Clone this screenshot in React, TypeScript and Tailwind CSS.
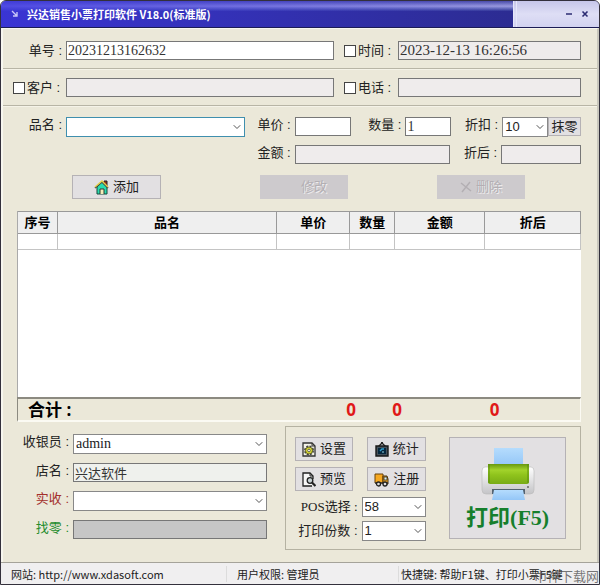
import React, { useState } from "react";
import { ChevronDown } from "lucide-react";

const field = "h-[19px] w-full min-w-0 border border-[#777] px-px font-['Liberation_Serif','Noto_Sans_CJK_SC',serif] text-[#333] outline-none";

function Combo({ id, label, options = [""], selectClass = "border-[#888]" }: {
    id: string;
    label: string;
    options?: string[];
    selectClass?: string;
}) {
    return (
        <div className="relative min-w-0">
            <select
                id={id}
                aria-label={label}
                className={`block h-5 w-full appearance-none border bg-white pr-4 pl-0.5 leading-4 text-[#222] outline-none ${selectClass}`}
            >
                {options.map((option) => (
                    <option key={option}>{option}</option>
                ))}
            </select>
            <ChevronDown className="pointer-events-none absolute top-1 right-0.5 size-3 text-[#555]" strokeWidth={2} />
        </div>
    );
}

function HomeIcon() {
    return (
        <svg viewBox="0 0 15 15" className="size-[15px]">
            <path d="M10 1h3v5h-3z" fill="#a02818" stroke="#222" />
            <path d="M3 7v7h10V7L8 2z" fill="#27dcae" stroke="#164a3c" />
            <path d="M1 8l7-6 6 6" fill="none" stroke="#444" strokeWidth="1.6" />
            <path d="M1 7l7-6 6 6" fill="none" stroke="#e2d24a" strokeWidth="1.3" />
            <path d="M6 14V9h4v5" fill="#f4efb8" stroke="#333" />
        </svg>
    );
}

function GearPageIcon() {
    return (
        <svg viewBox="0 0 14 15" className="h-[15px] w-3.5">
            <path d="M1 1h9l3 3v10H1z" fill="#f4f3e8" stroke="#333" strokeWidth="1.3" />
            <path d="M10 1v3h3" fill="none" stroke="#333" />
            <circle cx="7" cy="8.5" r="4" fill="none" stroke="#444" strokeWidth="2" strokeDasharray="2 1.14" />
            <circle cx="7" cy="8.5" r="3.5" fill="#d8d832" stroke="#55551c" strokeWidth=".8" />
            <circle cx="7" cy="8.5" r="1.3" fill="#fff" stroke="#444" strokeWidth=".8" />
        </svg>
    );
}

function BoardIcon() {
    return (
        <svg viewBox="0 0 14 15" className="h-[15px] w-3.5">
            <path d="M3 5l4-4 4 4" fill="none" stroke="#222" strokeWidth="1.4" />
            <path d="M6 0h2v2H6z" fill="#222" />
            <path d="M1 4h12v10H1z" fill="#46525c" stroke="#181818" strokeWidth="1.4" />
            <path d="M3 6h8v6H3z" fill="#06273d" />
            <path d="M5 9l2-2h2" fill="none" stroke="#2f9fd0" strokeWidth="1.4" />
            <path d="M7 10h2" stroke="#94d9e8" />
        </svg>
    );
}

function PreviewIcon() {
    return (
        <svg viewBox="0 0 14 15" className="h-[15px] w-3.5">
            <path d="M10 14H1V1h7l3 3v3" fill="#f7f7f7" stroke="#222" strokeWidth="1.3" />
            <path d="M8 1v3h3" fill="none" stroke="#222" />
            <circle cx="8" cy="8.5" r="2.8" fill="#c9d3d6" stroke="#222" strokeWidth="1.3" />
            <path d="M10 10.5l3.500 3.500" stroke="#222" strokeWidth="2.2" />
        </svg>
    );
}

function TruckIcon() {
    return (
        <svg viewBox="0 0 15 15" className="size-[15px]">
            <path d="M1 2h8v9H1z" fill="#f6a821" stroke="#6b430b" />
            <path d="M9 4h4l1 3v5H9z" fill="#f4a927" stroke="#4b320b" />
            <path d="M10 5h3v3h-3z" fill="#d8eef3" stroke="#3b321c" strokeWidth=".8" />
            <path d="M1 11h13" stroke="#333" strokeWidth="1.4" />
            <circle cx="4.5" cy="12" r="2" fill="#ddd" stroke="#222" strokeWidth="1.3" />
            <circle cx="11" cy="12" r="2" fill="#ddd" stroke="#222" strokeWidth="1.3" />
        </svg>
    );
}

function PrinterIcon() {
    return (
        <svg viewBox="0 0 56 56" className="size-14">
            <defs>
                <linearGradient id="paper" x2="0" y2="1">
                    <stop stopColor="#b5dcfd" />
                    <stop offset="1" stopColor="#94c6f7" />
                </linearGradient>
                <linearGradient id="green" x2="0" y2="1">
                    <stop stopColor="#699910" />
                    <stop offset=".3" stopColor="#a2d32b" />
                    <stop offset=".55" stopColor="#8fc31c" />
                    <stop offset="1" stopColor="#79ac16" />
                </linearGradient>
                <linearGradient id="shell" x2="0" y2="1">
                    <stop stopColor="#fff" />
                    <stop offset="1" stopColor="#c4c4c7" />
                </linearGradient>
            </defs>
            <path d="M5 21h46q3 0 3 4v19q0 4-4 4H6q-4 0-4-4V25q0-4 3-4z" fill="url(#shell)" stroke="#bbb" strokeWidth=".6" />
            <path d="M14 2h29v18H14z" fill="url(#paper)" />
            <path d="M8 18h41v18q0 2-2 2H10q-2 0-2-2z" fill="url(#green)" />
            <path d="M8 18h2v19H8zM47 18h2v19h-2z" fill="#55870c" opacity=".45" />
            <circle cx="48" cy="41" r="1" fill="#666" />
            <path d="M12 43h33v5H12z" fill="#53616f" />
            <path d="M14 44h29l2 10H12z" fill="url(#paper)" />
        </svg>
    );
}

const columns = [
    { name: "序号", width: "w-[7%]" },
    { name: "品名", width: "w-[39%]" },
    { name: "单价", width: "w-[13%]" },
    { name: "数量", width: "w-[8%]" },
    { name: "金额", width: "w-[16%]" },
    { name: "折后", width: "w-[17%]" },
];

const tools = [
    { name: "设置", icon: <GearPageIcon /> },
    { name: "统计", icon: <BoardIcon /> },
    { name: "预览", icon: <PreviewIcon /> },
    { name: "注册", icon: <TruckIcon /> },
];

const button = "flex items-center justify-center border border-[#b5b2b5] bg-[#e2e0e2]";
const disabledButton = "flex h-6 items-center justify-center gap-1 bg-[#cdcacd] text-[#b3afb3] [text-shadow:1px_1px_0_#efedef]";

export default function App() {
    const [order, setOrder] = useState("20231213162632");
    const [count, setCount] = useState("1");

    return (
        <div className="relative overflow-hidden rounded-t-md border border-[#33303c] bg-[#ebe8d9] font-['Liberation_Sans','Noto_Sans_CJK_SC',sans-serif] text-[13px] leading-4 text-[#222]">
            <header className="flex h-[27px] border-b border-[#1c1c55] bg-linear-to-b from-[#4a4aa8] via-[#9a9ade] via-20% to-[#2c2c92] to-40%">
                <div className="flex flex-1 items-center gap-2 bg-linear-to-r from-[#3d37e4]/80 to-transparent pl-2.5">
                    <svg viewBox="0 0 8 8" className="size-2">
                        <path d="M1 1l5 5M6 2v4H2" fill="none" stroke="#c8c8f8" strokeWidth="1.4" />
                    </svg>
                    <h1 className="font-['Noto_Sans_CJK_SC',sans-serif] text-[11px] font-bold text-white">兴达销售小票打印软件 V18.0(标准版)</h1>
                </div>
                <div className="flex w-[86px] items-center justify-end gap-1 border-l-4 border-double border-[#e6e6fa] bg-linear-to-b from-[#c6c6ea] via-[#dedef5] to-[#d2d2f0] pr-2 text-[#2b2b72]">
                    <button aria-label="最小化" className="flex size-3 items-center justify-center">
                        <svg viewBox="0 0 8 8" className="size-2"><path d="M1 4h6" stroke="currentColor" strokeWidth="1.6" /></svg>
                    </button>
                    <button aria-label="关闭" className="flex size-3 items-center justify-center">
                        <svg viewBox="0 0 8 8" className="size-2"><path d="M1.500 1.500l5 5M6.500 1.500l-5 5" stroke="currentColor" strokeWidth="1.6" /></svg>
                    </button>
                </div>
            </header>

            <main className="border-x-2 border-t border-[#f7f6ef] border-r-[#c9c7bd]">
                <div className="grid h-10 grid-cols-[63px_268fr_64px_183fr] items-center border-b border-[#b8b5a6] pt-1 pr-4">
                    <label htmlFor="order" className="pr-1 text-right">单号 :</label>
                    <input id="order" value={order} onChange={(e) => setOrder(e.target.value)} className={`${field} bg-white text-sm`} />
                    <label className="flex items-center gap-0.5 pl-2.5">
                        <input type="checkbox" className="size-3 shrink-0 appearance-none border border-[#444] bg-white" />
                        时间 :
                    </label>
                    <input aria-label="时间" readOnly value="2023-12-13 16:26:56" className={`${field} bg-[#efecec] text-[15px]`} />
                </div>
                <div className="grid h-[37px] grid-cols-[63px_268fr_64px_183fr] items-center border-y border-t-[#f5f3e8] border-b-[#b8b5a6] pr-4">
                    <label className="flex items-center gap-0.5 pl-2.5">
                        <input type="checkbox" className="size-3 shrink-0 appearance-none border border-[#444] bg-white" />
                        客户 :
                    </label>
                    <input aria-label="客户" readOnly className={`${field} bg-[#efecec] text-sm`} />
                    <label className="flex items-center gap-0.5 pl-2.5">
                        <input type="checkbox" className="size-3 shrink-0 appearance-none border border-[#444] bg-white" />
                        电话 :
                    </label>
                    <input aria-label="电话" readOnly className={`${field} bg-[#efecec] text-sm`} />
                </div>

                <section className="grid grid-cols-[63px_179fr_337fr] items-start border-t border-[#f5f3e8] pt-2.5 pr-4">
                    <label htmlFor="product" className="pr-1 text-right">品名 :</label>
                    <Combo id="product" label="品名" selectClass="border-[#3f8fae]" />
                    <div className="flex min-w-0 flex-col gap-2">
                        <div className="grid h-5 grid-cols-[50px_57fr_54px_46fr_51px_46fr_33px] items-start">
                            <label htmlFor="price" className="pr-1 text-right">单价 :</label>
                            <input id="price" className={`${field} bg-white text-sm`} />
                            <label htmlFor="count" className="pr-1 text-right">数量 :</label>
                            <input id="count" value={count} onChange={(e) => setCount(e.target.value)} className={`${field} bg-white text-sm`} />
                            <label htmlFor="discount" className="pr-1 text-right">折扣 :</label>
                            <Combo id="discount" label="折扣" options={["10", "9", "8"]} />
                            <button className={`${button} h-[19px]`}>抹零</button>
                        </div>
                        <div className="grid h-5 grid-cols-[50px_156fr_51px_80fr] items-start">
                            <label htmlFor="amount" className="pr-1 text-right">金额 :</label>
                            <input id="amount" readOnly className={`${field} bg-[#efecec] text-sm`} />
                            <label htmlFor="after" className="pr-1 text-right">折后 :</label>
                            <input id="after" readOnly className={`${field} bg-[#efecec] text-sm`} />
                        </div>
                    </div>
                </section>

                <div className="grid grid-cols-[69fr_89fr_99fr_88fr_89fr_88fr_72fr] pt-2.5 pb-3">
                    <button className={`${button} col-start-2 h-6 gap-1`}><HomeIcon />添加</button>
                    <button disabled className={`${disabledButton} col-start-4 pl-5`}>修改</button>
                    <button disabled className={`${disabledButton} col-start-6`}>
                        <svg viewBox="0 0 12 12" className="size-3"><path d="M1 2l10 8M10 1L2 11" stroke="currentColor" strokeWidth="1.5" /></svg>
                        删除
                    </button>
                </div>

                <div className="mr-4 ml-3.5">
                    <div className="h-[186px] border-l border-[#aaa] bg-white">
                        <table className="w-full table-fixed border-collapse">
                            <thead>
                                <tr className="h-[22px] bg-[#efefef]">
                                    {columns.map((column) => (
                                        <th key={column.name} className={`${column.width} border border-l-0 border-[#999] p-0 font-bold text-black`}>{column.name}</th>
                                    ))}
                                </tr>
                            </thead>
                            <tbody>
                                <tr className="h-4">
                                    {columns.map((column) => (
                                        <td key={column.name} className="border border-l-0 border-[#c4c4c4] p-0" />
                                    ))}
                                </tr>
                            </tbody>
                        </table>
                    </div>
                    <div className="grid h-[25px] grid-cols-[327fr_46fr_97fr_90fr] items-center border border-t-2 border-b-2 border-t-[#8c8a80] border-r-[#fbfaf3] border-b-[#fbfaf3] border-l-[#8c8a80] font-['Open_Sans','Noto_Sans_CJK_SC',sans-serif] text-[17px] font-bold">
                        <span className="pl-2.5 text-black">合计 :</span>
                        <output className="text-[#e01818]">0</output>
                        <output className="text-[#e01818]">0</output>
                        <output className="text-[#e01818]">0</output>
                    </div>
                </div>

                <div className="mt-1 grid grid-cols-[264fr_297fr] gap-x-[18px] pr-4 pb-3">
                    <div className="mt-2 grid grid-cols-[70px_1fr] content-start gap-y-[9px]">
                        <label htmlFor="cashier" className="pr-1 text-right">收银员 :</label>
                        <Combo id="cashier" label="收银员" options={["admin"]} selectClass="border-[#888] font-['Liberation_Serif',serif] text-sm" />
                        <label htmlFor="shop" className="pr-1 text-right">店名 :</label>
                        <input id="shop" readOnly value="兴达软件" className={`${field} bg-[#eff1ed]`} />
                        <label htmlFor="paid" className="pr-1 text-right text-[#a3302c]">实收 :</label>
                        <Combo id="paid" label="实收" />
                        <label htmlFor="change" className="pr-1 text-right text-[#228b2c]">找零 :</label>
                        <input id="change" readOnly className={`${field} bg-[#c6c6c6]`} />
                    </div>
                    <section className="grid grid-cols-[132fr_117fr] gap-x-[23px] border border-[#b5b2a2] pt-2.5 pr-3.5 pb-2 pl-[9px]">
                        <div>
                            <div className="grid grid-cols-2 gap-x-3.5 gap-y-1.5">
                                {tools.map((tool) => (
                                    <button key={tool.name} className={`${button} h-6 gap-1`}>{tool.icon}{tool.name}</button>
                                ))}
                            </div>
                            <div className="mt-1.5 grid grid-cols-[67px_1fr] gap-y-1">
                                <label htmlFor="pos" className="pt-0.5 pr-1 text-right font-['Liberation_Serif','Noto_Sans_CJK_SC',serif] whitespace-nowrap">POS选择 :</label>
                                <Combo id="pos" label="POS选择" options={["58", "80"]} />
                                <label htmlFor="copies" className="pt-0.5 pr-1 text-right whitespace-nowrap">打印份数 :</label>
                                <Combo id="copies" label="打印份数" options={["1", "2", "3"]} />
                            </div>
                        </div>
                        <button className="mb-0.5 flex flex-col items-center justify-center border border-[#b5b2b5] bg-[#e2e0e2]">
                            <PrinterIcon />
                            <span className="mt-1 font-['Liberation_Serif','Noto_Sans_CJK_SC',serif] text-[22px] leading-6 font-bold text-[#167f2c]">打印(F5)</span>
                        </button>
                    </section>
                </div>
            </main>

            <footer className="grid h-[22px] grid-cols-[225fr_172fr_201fr] items-center border-t border-[#a5a39a] bg-[#f0eff0] font-['Noto_Sans_CJK_SC',sans-serif] text-[11px]">
                <span className="pl-2.5">网站: <a href="http://www.xdasoft.com">http://www.xdasoft.com</a></span>
                <span className="border-l border-[#dcdcdc] pl-2.5">用户权限: 管理员</span>
                <span className="border-l border-[#dcdcdc] pl-0.5 whitespace-nowrap">快捷键: 帮助F1键、打印小票F5键</span>
            </footer>
            <span className="pointer-events-none absolute right-0 bottom-0 font-['Noto_Sans_CJK_SC',sans-serif] text-[13px] leading-4 text-[#555]/80">巾神下载网</span>
        </div>
    );
}
